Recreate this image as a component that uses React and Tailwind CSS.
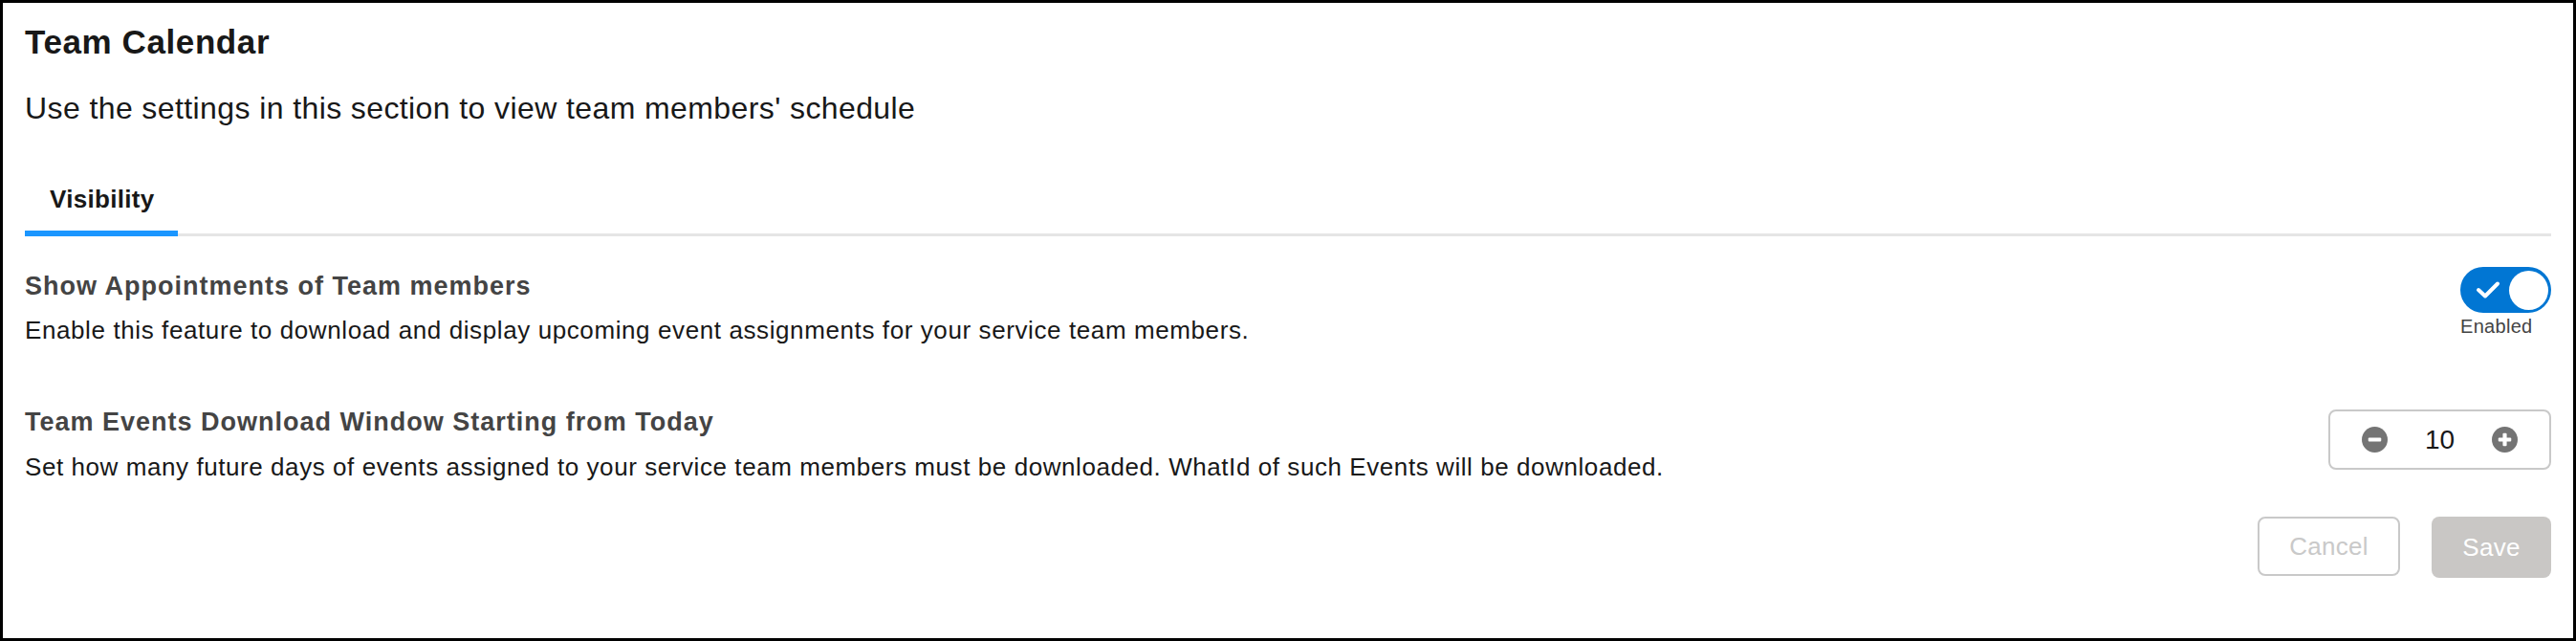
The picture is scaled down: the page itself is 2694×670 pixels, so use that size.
import React from "react";

function Toggle() {
  return (
    <div className="flex flex-col items-start">
      <div className="flex h-[48px] w-[95px] items-center justify-between rounded-full bg-[#0176d3] pl-[16px] pr-[3px]">
        <svg width="26" height="20" viewBox="0 0 26 20" fill="none">
          <path d="M3 10 L10 16.5 L23 3.5" stroke="#ffffff" strokeWidth="4" strokeLinecap="round" strokeLinejoin="round" />
        </svg>
        <div className="h-[41px] w-[41px] rounded-full bg-white" />
      </div>
      <span className="mt-[2px] text-[20px] leading-[24px] tracking-[0.3px] text-[#444444]">Enabled</span>
    </div>
  );
}

function RoundIcon({ plus }) {
  return (
    <svg width="27" height="27" viewBox="0 0 26 26">
      <circle cx="13" cy="13" r="13" fill="#747474" />
      <rect x="6.5" y="11" width="13" height="4" rx="1" fill="#ffffff" />
      {plus && <rect x="11" y="6.5" width="4" height="13" rx="1" fill="#ffffff" />}
    </svg>
  );
}

function Counter() {
  return (
    <div className="mt-[3px] flex h-[63px] w-[233px] items-center justify-between rounded-[8px] border-2 border-[#c9c9c9] px-[33px]">
      <RoundIcon />
      <span className="text-[28px] leading-[32px] text-[#181818]">10</span>
      <RoundIcon plus />
    </div>
  );
}

export default function App() {
  return (
    <div
      className="box-border h-[670px] w-[2694px] border-[3px] border-black bg-white px-[23px] pt-[19px]"
      style={{ fontFamily: '"Liberation Sans", Arial, sans-serif' }}
    >
      <h1 className="text-[35px] font-bold leading-[44px] tracking-[0.6px] text-[#181818]">Team Calendar</h1>
      <p className="mt-[27px] text-[32px] leading-[40px] tracking-[0.4px] text-[#181818]">
        Use the settings in this section to view team members' schedule
      </p>

      <div className="mt-[59px] flex border-b-[3px] border-[#e5e5e5]">
        <div className="-mb-[3px] border-b-[6px] border-[#1b96ff] pb-[17px] pl-[26px] pr-[25px] text-[26px] font-bold leading-[32px] tracking-[0.3px] text-[#181818]">
          Visibility
        </div>
      </div>

      <div className="mt-[32px] flex items-start justify-between">
        <div className="pt-[4px]">
          <div className="text-[27px] font-bold leading-[32px] tracking-[1px] text-[#444444]">Show Appointments of Team members</div>
          <div className="mt-[14px] text-[26px] leading-[32px] tracking-[0.6px] text-[#181818]">
            Enable this feature to download and display upcoming event assignments for your service team members.
          </div>
        </div>
        <Toggle />
      </div>

      <div className="mt-[64px] flex items-start justify-between">
        <div>
          <div className="text-[27px] font-bold leading-[32px] tracking-[1px] text-[#444444]">Team Events Download Window Starting from Today</div>
          <div className="mt-[15px] text-[26px] leading-[32px] tracking-[0.57px] text-[#181818]">
            Set how many future days of events assigned to your service team members must be downloaded. WhatId of such Events will be downloaded.
          </div>
        </div>
        <Counter />
      </div>

      <div className="mt-[36px] flex justify-end gap-[33px]">
        <button className="h-[62px] w-[149px] rounded-[8px] border-2 border-[#c9c9c9] bg-white text-[26px] tracking-[0.3px] text-[#c9c9c9]">
          Cancel
        </button>
        <button className="h-[64px] w-[125px] rounded-[8px] bg-[#c9c7c5] text-[26px] tracking-[0.3px] text-white">Save</button>
      </div>
    </div>
  );
}
